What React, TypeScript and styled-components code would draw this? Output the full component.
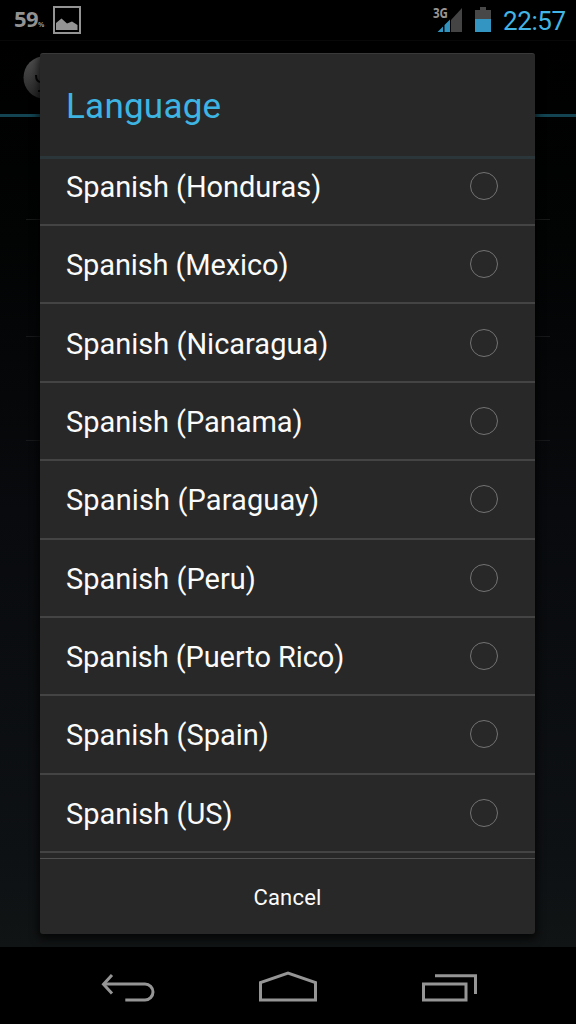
import React from "react";
import styled, { createGlobalStyle } from "styled-components";

const GlobalStyle = createGlobalStyle`
  * { box-sizing: border-box; }
  body { margin: 0; background: #000; font-family: Roboto, "Liberation Sans", sans-serif; }
`;

const Screen = styled.div`
  position: relative;
  display: flex;
  flex-direction: column;
  width: 576px;
  height: 1024px;
  overflow: hidden;
  background: #000;
`;

const StatusBar = styled.header`
  display: flex;
  align-items: center;
  justify-content: space-between;
  height: 40px;
  padding: 0 10px 0 14px;
  flex: none;
`;

const StatusGroup = styled.div`
  display: flex;
  align-items: center;
  height: 40px;
`;

const Percent = styled.span`
  display: flex;
  align-items: baseline;
  width: 39px;
  font: 700 22px/40px "Open Sans", sans-serif;
  letter-spacing: -0.6px;
  padding-top: 2px;
  color: #929292;
  small { font-size: 7px; }
`;

const Clock = styled.time`
  display: block;
  width: 63px;
  padding-top: 2px;
  margin-left: 12px;
  font-size: 26px;
  line-height: 40px;
  letter-spacing: -0.4px;
  white-space: nowrap;
  color: #42b5e4;
`;

const Page = styled.main`
  height: 907px;
  flex: none;
  background: linear-gradient(#000 0%, #020303 22%, #080a0d 52%, #0e1114 90%, #111414 100%);
`;

const ActionBar = styled.div`
  height: 77px;
  padding: 15px 0 0 23px;
  border-top: 1px solid #080808;
  border-bottom: 3px solid #124452;
`;

const Setting = styled.div<{ $height: number }>`
  height: ${(p) => p.$height}px;
  margin: 0 26px;
  border-bottom: 1px solid #171819;
`;

const Dialog = styled.section`
  position: absolute;
  left: 40px;
  top: 53px;
  width: 495px;
  height: 881px;
  display: flex;
  flex-direction: column;
  background: #282828;
  border-top: 1px solid #393939;
  border-radius: 3px;
  box-shadow: 0 3px 9px 2px rgba(0, 0, 0, 0.7);
`;

const Title = styled.h1`
  height: 105px;
  margin: 0;
  padding-left: 26px;
  flex: none;
  border-bottom: 3px solid #2b363a;
  font-size: 35px;
  font-weight: 400;
  line-height: 105px;
  letter-spacing: 0.25px;
  color: #3db4e2;
`;

const List = styled.ul`
  display: flex;
  flex-direction: column;
  justify-content: flex-end;
  height: 694px;
  margin: 0;
  padding: 0;
  flex: none;
  overflow: hidden;
  list-style: none;
`;

const Option = styled.li`
  display: flex;
  align-items: center;
  justify-content: space-between;
  height: 78.375px;
  padding: 0 37px 0 26px;
  flex: none;
  border-bottom: 2px solid #444;
  color: #fbfbfb;
  font-size: 29px;
`;

const OptionLabel = styled.span<{ $tracking: number }>`
  padding-top: 2px;
  letter-spacing: ${(p) => p.$tracking}px;
  white-space: nowrap;
`;

const Radio = styled.span`
  width: 28px;
  height: 28px;
  border: 1px solid #737373;
  border-radius: 50%;
`;

const CancelButton = styled.button`
  flex: 1;
  margin: 5px 0 0;
  padding: 2px 0 0;
  border: 0;
  border-top: 1px solid #505050;
  background: none;
  color: #fbfbfb;
  font: 400 22px Roboto, sans-serif;
  letter-spacing: 0.2px;
`;

const NavBar = styled.nav`
  display: flex;
  height: 77px;
  padding-left: 100px;
  flex: none;
  background: #000;
`;

const options: [string, number][] = [
  ["Honduras", -0.05],
  ["Mexico", -0.12],
  ["Nicaragua", 0],
  ["Panama", -0.05],
  ["Paraguay", 0.12],
  ["Peru", 0],
  ["Puerto Rico", -0.1],
  ["Spain", 0],
  ["US", 0],
];

const PictureIcon = () => (
  <svg width="28" height="28" viewBox="0 0 28 28">
    <path d="M1 1h26v26H1z" fill="none" stroke="#949494" strokeWidth="2" />
    <path d="M3 24v-7l5.500-4.500 5.500 5 5-2 5.500 3.500v5z" fill="#949494" />
  </svg>
);

const SignalIcon = () => (
  <svg width="32" height="40" viewBox="0 0 32 40">
    <path d="M31 8v24H20V20z" fill="#444" />
    <path d="M6.500 32l5.500-5.500v5.500zM13.500 32v-7l5.500-5.500V32z" fill="#3193bf" />
    <text x="2" y="18" fontFamily="Open Sans, sans-serif" fontWeight="700" fontSize="13.5" textLength="15" lengthAdjust="spacingAndGlyphs" fill="#969696">3G</text>
  </svg>
);

const BatterySvg = styled.svg`
  margin-left: 12px;
`;

const BatteryIcon = () => (
  <BatterySvg width="16" height="40" viewBox="0 0 16 40">
    <path d="M0 10h5V7h6v3h5v9H0z" fill="#484848" />
    <path d="M0 19h16v13H0z" fill="#3395c1" />
  </BatterySvg>
);

const AppIcon = () => (
  <svg width="46" height="46" viewBox="0 0 46 46">
    <defs>
      <linearGradient id="disc" x2="0" y2="1">
        <stop stopColor="#505050" />
        <stop offset="1" stopColor="#252525" />
      </linearGradient>
    </defs>
    <circle cx="22" cy="21.500" r="21.500" fill="url(#disc)" />
    <path d="M13 19q0 7 5 7M15 35h3" fill="none" stroke="#050505" strokeWidth="2" />
  </svg>
);

const NavIcons = () => (
  <svg width="380" height="77" viewBox="100 0 380 77" fill="none" stroke="#959595" strokeWidth="3">
    <path d="M105 37H145a8 8 0 0 1 0 16H125.300" />
    <path d="M112 28l-8.500 9.300 8.500 9.200" />
    <path d="M260.500 53V35.500L288 26l27.500 9.500V53z" />
    <path d="M423.500 37h42.500v16h-42.500zM435 28.700h40.500v18.200" />
  </svg>
);

export default function App() {
  return (
    <>
      <GlobalStyle />
      <Screen>
        <StatusBar>
          <StatusGroup>
            <Percent>59<small>%</small></Percent>
            <PictureIcon />
          </StatusGroup>
          <StatusGroup>
            <SignalIcon />
            <BatteryIcon />
            <Clock>22:57</Clock>
          </StatusGroup>
        </StatusBar>
        <Page>
          <ActionBar><AppIcon /></ActionBar>
          <Setting $height={103} />
          <Setting $height={117} />
          <Setting $height={104} />
        </Page>
        <NavBar><NavIcons /></NavBar>
        <Dialog>
          <Title>Language</Title>
          <List>
            {options.map(([country, tracking]) => (
              <Option key={country}>
                <OptionLabel $tracking={tracking}>Spanish ({country})</OptionLabel>
                <Radio />
              </Option>
            ))}
          </List>
          <CancelButton>Cancel</CancelButton>
        </Dialog>
      </Screen>
    </>
  );
}
